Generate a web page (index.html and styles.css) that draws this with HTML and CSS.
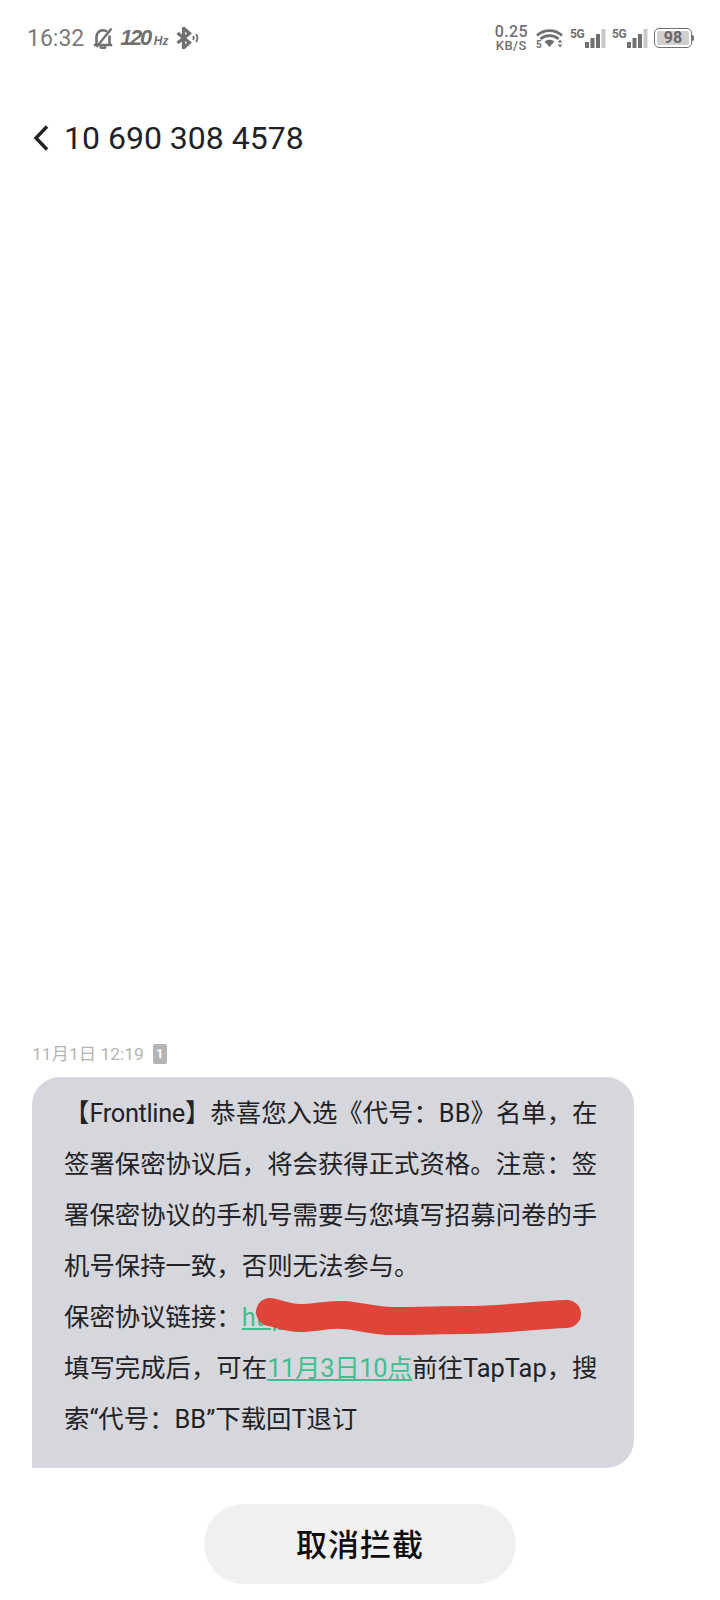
FILE: index.html
```html
<!DOCTYPE html>
<html lang="zh-CN">
<head>
<meta charset="utf-8">
<title>10 690 308 4578</title>
<link rel="stylesheet" href="styles.css">
</head>
<body>
<div class="screen">
  <div class="status">
    <div class="status-left">
      <span class="time">16:32</span>
      <svg class="ic-bell" viewBox="0 0 20 22" width="20" height="22"><path d="M3.500 17.500V10c0-4 2.800-6.800 6.500-6.800 1.600 0 3 .5 4.100 1.400M16.500 8.500v9M.8 18h18.400M7.500 19.500c.3 2 4.700 2 5 0" fill="none" stroke="#707070" stroke-width="2.600"/><path d="M3.500 20 18.500 1.500" fill="none" stroke="#707070" stroke-width="2.400"/></svg>
      <span class="hz"><b>120</b><i>Hz</i></span>
      <svg class="ic-bt" viewBox="0 0 24 22" width="24" height="22"><path d="M1.500 6l12 9.500-6 5.500V1l6 5.500-12 9.500" fill="none" stroke="#707070" stroke-width="3.200"/><path d="M17 9c.9 1.200.9 2.800 0 4M20 7c1.700 2.400 1.700 5.600 0 8" fill="none" stroke="#707070" stroke-width="1.800"/></svg>
    </div>
    <div class="status-right">
      <div class="speed"><span>0.25</span><span class="unit">KB/S</span></div>
      <svg class="ic-wifi" viewBox="0 0 27 20" width="27" height="20"><path d="M1 7.500c7-6.500 18-6.500 25 0M4.500 11c5-4.500 13-4.500 18 0" fill="none" stroke="#707070" stroke-width="2.800"/><path d="M8.500 13.500c3-2.500 7-2.500 10 0L13.500 19z" fill="#707070"/><text x="0" y="19.500" class="wifi-five">5</text><path d="M24 11.500l2.300 3h-4.600zM24 19.500l-2.300-3h4.600z" fill="#707070"/></svg>
      <div class="signal">
        <span class="five-g">5G</span>
        <svg viewBox="0 0 22 19" width="22" height="19"><rect x="1" y="13" width="4" height="6" fill="#707070"/><rect x="6.500" y="9" width="4" height="10" fill="#707070"/><rect x="12" y="5" width="4" height="14" fill="#707070"/><rect x="17.500" y="0" width="4" height="19" fill="#c9c9c9"/></svg>
      </div>
      <div class="signal">
        <span class="five-g">5G</span>
        <svg viewBox="0 0 22 19" width="22" height="19"><rect x="1" y="13" width="4" height="6" fill="#707070"/><rect x="6.500" y="9" width="4" height="10" fill="#707070"/><rect x="12" y="5" width="4" height="14" fill="#707070"/><rect x="17.500" y="0" width="4" height="19" fill="#c9c9c9"/></svg>
      </div>
      <div class="battery"><div class="battery-body"><span class="battery-level">98</span></div><div class="battery-tip"></div></div>
    </div>
  </div>

  <header class="title-bar">
    <svg class="back" viewBox="0 0 18 28" width="18" height="28"><path d="M15 2.500 4 14l11 11.500" fill="none" stroke="#222226" stroke-width="3.400"/></svg>
    <h1 class="title">10 690 308 4578</h1>
  </header>

  <main class="thread">
    <div class="stamp"><span>11月1日 12:19</span><span class="sim">1</span></div>
    <div class="bubble">
      <p class="bubble-text">【<span class="latin">Frontline</span>】恭喜您入选《代号：BB》名单，在签署保密协议后，将会获得正式资格。注意：签署保密协议的手机号需要与您填写招募问卷的手机号保持一致，否则无法参与。<br>保密协议链接：<a class="link" href="#">https://</a><br>填写完成后，可在<a class="link" href="#">11月3日10点</a>前往TapTap，搜索“代号：BB”下载回T退订</p>
      <svg class="scribble" viewBox="0 0 340 56" width="340" height="56"><path d="M14 22c10 2 18 6 30 6 16 0 28-4 43-3 18 1 30 6 50 6 28 0 50-1 74-1 36 0 66-5 100-6" fill="none" stroke="#de4437" stroke-width="28" stroke-linecap="round" stroke-linejoin="round"/></svg>
    </div>
  </main>

  <div class="action"><button class="cancel" type="button">取消拦截</button></div>
</div>
</body>
</html>
```

FILE: styles.css
```css
* { box-sizing: border-box; }
html, body { margin: 0; padding: 0; background: #fff; }
body { font-family: Roboto, "Noto Sans CJK SC", sans-serif; }
.screen { width: 720px; height: 1600px; display: flex; flex-direction: column; overflow: hidden; }

.status { height: 76px; flex: none; display: flex; justify-content: space-between; align-items: center; padding: 0 26px 0 27px; color: #707070; }
.status-left, .status-right { display: flex; align-items: center; }
.time { font-size: 23px; color: #7a7a7a; }
.ic-bell { margin-left: 9px; }
.hz { margin-left: 7px; font-style: italic; display: flex; align-items: baseline; font-family: "Liberation Sans", sans-serif; }
.hz b { font-size: 22px; letter-spacing: -2.400px; }
.hz i { font-size: 12px; font-weight: 700; margin-left: 4px; }
.ic-bt { margin-left: 8px; }

.speed { display: flex; flex-direction: column; align-items: center; font-size: 16px; line-height: 14px; font-weight: 500; letter-spacing: .4px; }
.speed .unit { font-size: 13px; line-height: 13px; font-weight: 500; }
.ic-wifi { margin-left: 8px; }
.wifi-five { font: 700 10px Roboto, sans-serif; fill: #707070; }
.signal { display: flex; align-items: flex-start; margin-left: 7px; height: 19px; }
.signal + .signal { margin-left: 6px; }
.five-g { font-size: 12px; line-height: 11px; font-weight: 700; width: 14px; letter-spacing: -.3px; }
.battery { display: flex; align-items: center; margin-left: 6px; }
.battery-body { width: 38px; height: 20px; border: 1.500px solid #707070; border-radius: 5px; padding: 2px; display: flex; }
.battery-level { flex: 1; background: #cfcfcf; border-radius: 2px; font-size: 16px; line-height: 13px; font-weight: 700; text-align: center; color: #666; }
.battery-tip { width: 2px; height: 6px; background: #707070; border-radius: 0 2px 2px 0; }

.title-bar { height: 124px; flex: none; display: flex; align-items: center; padding-left: 32px; }
.back { flex: none; }
.title { margin: 0 0 0 14px; font-size: 32px; font-weight: 400; color: #222226; }

.thread { flex: 1; display: flex; flex-direction: column; justify-content: flex-end; padding-left: 32px; }
.stamp { display: flex; align-items: center; gap: 9px; font-size: 17.400px; line-height: 22px; color: #b4b4b4; margin-bottom: 12px; }
.sim { width: 14px; height: 20px; border-radius: 2px; background: #b4b4b4; color: #fff; font-size: 13px; font-weight: 700; line-height: 20px; text-align: center; }
.bubble { position: relative; width: 602px; height: 391px; background: #d6d7dc; border-radius: 28px 28px 28px 0; padding: 11px 20px 0 32px; }
.bubble-text { margin: 0; font-size: 25.400px; line-height: 51px; color: #222226; }
.latin { letter-spacing: -.35px; }
.link { color: #3fbf8f; text-decoration: underline; text-underline-offset: 2px; letter-spacing: -.3px; }
.scribble { position: absolute; left: 224px; top: 213px; }

.action { flex: none; display: flex; justify-content: center; padding: 36px 0 16px; }
.cancel { width: 312px; height: 80px; border: 0; border-radius: 40px; background: #f0f0f1; color: #0d0d0f; font-family: inherit; font-size: 31px; font-weight: 500; letter-spacing: 1px; padding: 0 0 4px; }
```
